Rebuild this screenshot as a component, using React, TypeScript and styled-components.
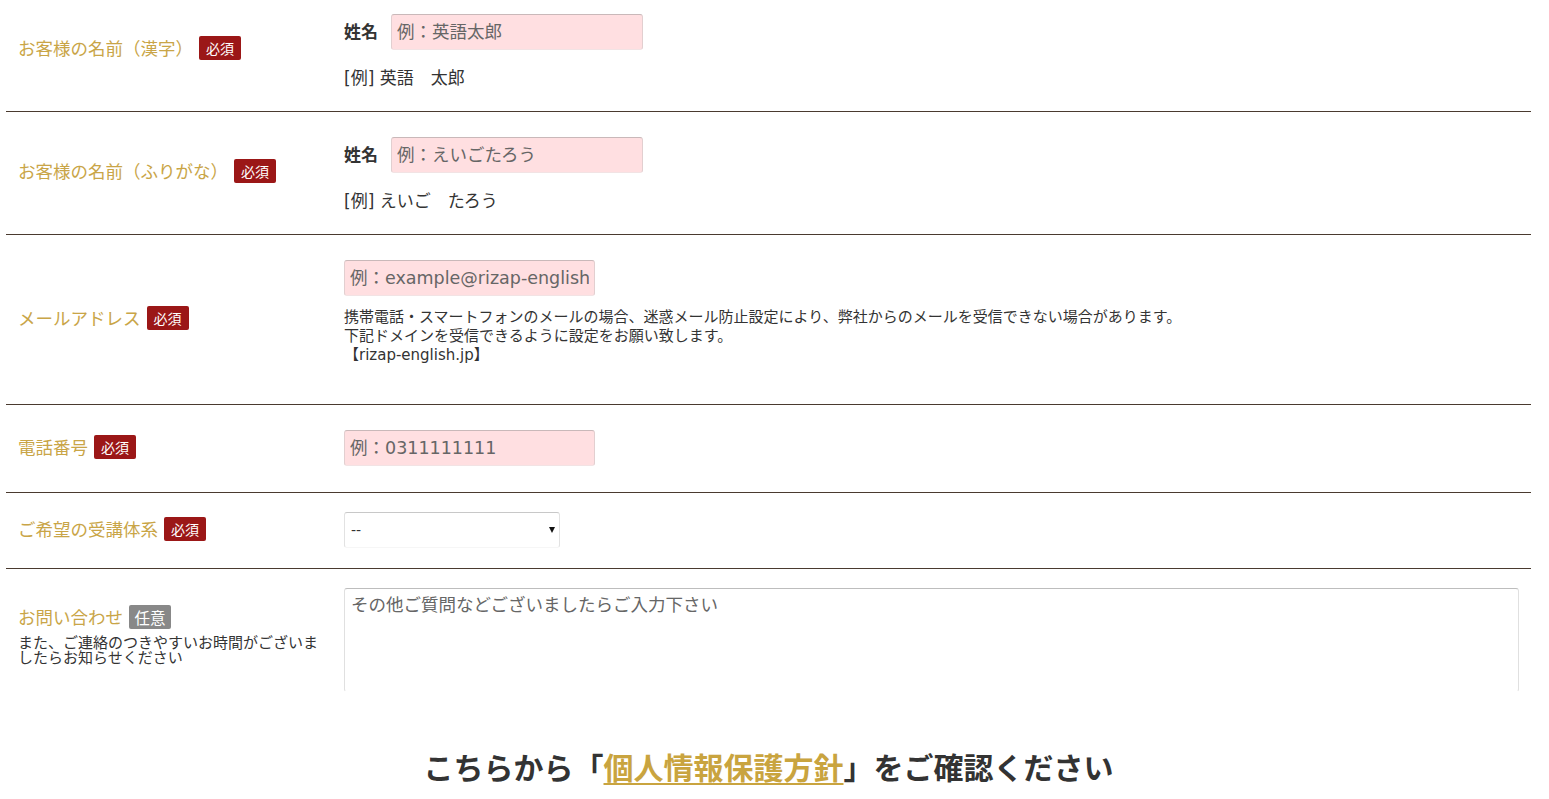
import React from "react";
import styled, { createGlobalStyle } from "styled-components";

const FONT = `"DejaVu Sans", "Noto Sans CJK JP", "Noto Sans", sans-serif`;

const Global = createGlobalStyle`
  html, body { margin: 0; padding: 0; background: #fff; }
  body {
    font-family: ${FONT};
    color: #333;
    overflow: hidden;
  }
  * { box-sizing: border-box; }
`;

const Page = styled.div`
  width: 1549px;
  height: 799px;
  overflow: hidden;
  padding: 0 18px 0 6px;
`;

const Table = styled.div`
  margin-top: -11px;
  display: flex;
  flex-direction: column;
`;

const Row = styled.div<{ $last?: boolean }>`
  display: grid;
  grid-template-columns: 338px 1fr;
  border-bottom: ${(p) => (p.$last ? "none" : "1px solid #4a3a2f")};
`;

const LabelCell = styled.div<{ $lift?: number }>`
  align-self: center;
  padding-left: 12px;
  margin-bottom: ${(p) => p.$lift ?? 4}px;
`;

const LabelLine = styled.div`
  display: flex;
  align-items: center;
  gap: 6px;
`;

const LabelText = styled.span`
  font-family: "Noto Sans CJK JP", sans-serif;
  font-size: 17.5px;
  line-height: 24px;
  color: #c9a547;
  white-space: nowrap;
`;

const Badge = styled.span<{ $optional?: boolean }>`
  display: inline-flex;
  align-items: center;
  justify-content: center;
  height: 24px;
  border-radius: 2px;
  font-family: "Noto Sans CJK JP", sans-serif;
  font-size: ${(p) => (p.$optional ? 15.5 : 14)}px;
  padding: 0 ${(p) => (p.$optional ? 5.5 : 7)}px;
  color: #fff;
  background: ${(p) => (p.$optional ? "#888888" : "#9b1717")};
`;

const SubNote = styled.div`
  margin-top: 5px;
  font-family: "Noto Sans CJK JP", sans-serif;
  font-size: 15px;
  line-height: 15px;
  color: #333;
  width: 310px;
`;

const FieldCell = styled.div<{ $pt: number; $pb: number }>`
  padding: ${(p) => p.$pt}px 12px ${(p) => p.$pb}px 0;
  display: flex;
  flex-direction: column;
  align-items: flex-start;
`;

const NameLine = styled.div`
  display: flex;
  align-items: center;
  gap: 13px;
`;

const NameLabel = styled.span`
  font-family: "Noto Sans CJK JP", sans-serif;
  font-size: 17px;
  font-weight: 700;
  color: #333;
  margin-bottom: 3px;
`;

const TextInput = styled.input<{ $w: number }>`
  width: ${(p) => p.$w}px;
  height: 36px;
  padding: 0 5px;
  background: #ffdfe1;
  border: 1px solid;
  border-color: #c9b8b9 #e2cfd0 #f2e3e4 #e2cfd0;
  border-radius: 3px;
  font-family: ${FONT};
  font-size: 17.5px;
  color: #333;
  outline: none;
  &::placeholder { color: #666; opacity: 1; }
`;

const Example = styled.div`
  margin-top: 16px;
  font-size: 17px;
  line-height: 24px;
  color: #333;
`;

const Notes = styled.div`
  margin-top: 12px;
  font-size: 15px;
  line-height: 19px;
  color: #333;
`;

const SelectWrap = styled.div`
  position: relative;
  width: 216px;
  height: 36px;
  &::after {
    content: "";
    position: absolute;
    right: 5px;
    top: 15px;
    border-left: 3.5px solid transparent;
    border-right: 3.5px solid transparent;
    border-top: 6px solid #111;
    pointer-events: none;
  }
`;

const Select = styled.select`
  appearance: none;
  width: 100%;
  height: 100%;
  padding: 0 6px;
  background: #fff;
  border: 1px solid;
  border-color: #c8c8c8 #e2e2e2 #f6f6f6 #e2e2e2;
  border-radius: 3px;
  font-family: ${FONT};
  font-size: 14px;
  color: #333;
  outline: none;
`;

const TextArea = styled.textarea`
  width: 100%;
  height: 104px;
  padding: 4px 6px;
  resize: none;
  background: #fff;
  border: 1px solid;
  border-color: #bdbdbd #e0e0e0 #fff #e0e0e0;
  border-radius: 3px;
  font-family: "Noto Sans CJK JP", sans-serif;
  font-size: 17.5px;
  line-height: 22px;
  color: #333;
  outline: none;
  &::placeholder { color: #666; opacity: 1; }
`;

const Heading = styled.h2`
  margin: 34px 0 0;
  text-align: center;
  font-family: "Noto Sans CJK JP", sans-serif;
  font-size: 30px;
  line-height: 40px;
  font-weight: 700;
  color: #333;
`;

const PolicyLink = styled.a`
  color: #c9a43f;
  text-decoration: underline;
  text-decoration-thickness: 2px;
  text-underline-offset: 4px;
`;

const Label: React.FC<{ text: string; optional?: boolean; note?: string; lift?: number }> = ({
  text,
  optional,
  note,
  lift,
}) => (
  <LabelCell $lift={lift}>
    <LabelLine>
      <LabelText>{text}</LabelText>
      <Badge $optional={optional}>{optional ? "任意" : "必須"}</Badge>
    </LabelLine>
    {note && <SubNote>{note}</SubNote>}
  </LabelCell>
);

export default function App() {
  return (
    <Page>
      <Global />
      <Table>
        <Row>
          <Label text="お客様の名前（漢字）" />
          <FieldCell $pt={25} $pb={21}>
            <NameLine>
              <NameLabel>姓名</NameLabel>
              <TextInput $w={252} placeholder="例：英語太郎" />
            </NameLine>
            <Example>[例] 英語　太郎</Example>
          </FieldCell>
        </Row>
        <Row>
          <Label text="お客様の名前（ふりがな）" />
          <FieldCell $pt={25} $pb={21}>
            <NameLine>
              <NameLabel>姓名</NameLabel>
              <TextInput $w={252} placeholder="例：えいごたろう" />
            </NameLine>
            <Example>[例] えいご　たろう</Example>
          </FieldCell>
        </Row>
        <Row>
          <Label text="メールアドレス" />
          <FieldCell $pt={25} $pb={39}>
            <TextInput $w={251} placeholder="例：example@rizap-english.jp" />
            <Notes>
              携帯電話・スマートフォンのメールの場合、迷惑メール防止設定により、弊社からのメールを受信できない場合があります。
              <br />
              下記ドメインを受信できるように設定をお願い致します。
              <br />
              【rizap-english.jp】
            </Notes>
          </FieldCell>
        </Row>
        <Row>
          <Label text="電話番号" />
          <FieldCell $pt={25} $pb={26}>
            <TextInput $w={251} placeholder="例：0311111111" />
          </FieldCell>
        </Row>
        <Row>
          <Label text="ご希望の受講体系" />
          <FieldCell $pt={19} $pb={20}>
            <SelectWrap>
              <Select defaultValue="">
                <option value="">--</option>
              </Select>
            </SelectWrap>
          </FieldCell>
        </Row>
        <Row $last>
          <Label
            text="お問い合わせ"
            optional
            lift={12}
            note="また、ご連絡のつきやすいお時間がございましたらお知らせください"
          />
          <FieldCell $pt={19} $pb={20}>
            <TextArea placeholder="その他ご質問などございましたらご入力下さい" />
          </FieldCell>
        </Row>
      </Table>
      <Heading>
        こちらから「<PolicyLink href="#">個人情報保護方針</PolicyLink>」をご確認ください
      </Heading>
    </Page>
  );
}
